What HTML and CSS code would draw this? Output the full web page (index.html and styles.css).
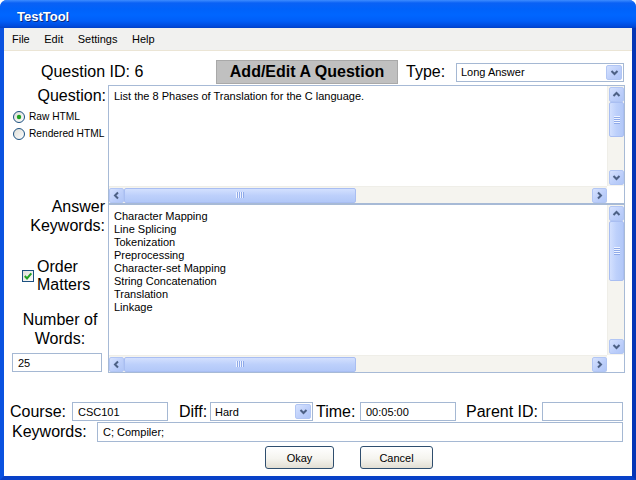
FILE: index.html
```html
<!DOCTYPE html>
<html>
<head>
<meta charset="utf-8">
<link rel="stylesheet" href="styles.css">
</head>
<body>
<div class="window">
  <div class="titlebar"><span class="title">TestTool</span></div>
  <div class="frame">
    <div class="menubar"><span>File</span><span>Edit</span><span>Settings</span><span>Help</span></div>
    <div class="client">
      <div class="toprow">
        <div class="qid">Question ID: 6</div>
        <div class="heading">Add/Edit A Question</div>
        <div class="type-label">Type:</div>
        <div class="select select-type">
          <span class="select-text">Long Answer</span>
          <span class="sbtn drop"><svg width="15" height="15" viewBox="0 0 15 15"><path d="M4.5 6 L7.5 9 L10.5 6" fill="none" stroke="#4d6185" stroke-width="2"/></svg></span>
        </div>
      </div>
      <div class="main">
        <div class="side">
          <div class="big q-label">Question:</div>
          <div class="radios">
            <div class="radio-row">
              <svg width="12" height="12" viewBox="0 0 12 12"><defs><linearGradient id="rg1" x1="0" y1="0" x2="1" y2="1"><stop offset="0" stop-color="#dcdcd5"/><stop offset="1" stop-color="#ffffff"/></linearGradient></defs><circle cx="6" cy="6" r="5.5" fill="url(#rg1)" stroke="#1c5180"/><circle cx="6" cy="6" r="2.2" fill="#21a121"/></svg>
              <span>Raw HTML</span>
            </div>
            <div class="radio-row">
              <svg width="12" height="12" viewBox="0 0 12 12"><defs><linearGradient id="rg2" x1="0" y1="0" x2="1" y2="1"><stop offset="0" stop-color="#dcdcd5"/><stop offset="1" stop-color="#ffffff"/></linearGradient></defs><circle cx="6" cy="6" r="5.5" fill="url(#rg2)" stroke="#1c5180"/></svg>
              <span>Rendered HTML</span>
            </div>
          </div>
          <div class="big ak-label">Answer<br>Keywords:</div>
          <div class="order">
            <svg width="12" height="12" viewBox="0 0 12 12"><defs><linearGradient id="cg" x1="0" y1="0" x2="1" y2="1"><stop offset="0" stop-color="#dcdcd5"/><stop offset="1" stop-color="#ffffff"/></linearGradient></defs><rect x="0.5" y="0.5" width="11" height="11" fill="url(#cg)" stroke="#1c5180"/><path d="M2.8 6 L5 8.5 L9.3 3.3" fill="none" stroke="#21a121" stroke-width="2"/></svg>
            <div class="big order-text">Order<br>Matters</div>
          </div>
          <div class="big nw-label">Number of<br>Words:</div>
          <div class="field nw-field">25</div>
        </div>
        <div class="areas">
          <div class="ta ta-q">
            <div class="ta-text">List the 8 Phases of Translation for the C language.</div>
            <div class="vscroll">
              <span class="sbtn"><svg width="15" height="15" viewBox="0 0 15 15"><path d="M4.5 9 L7.5 6 L10.5 9" fill="none" stroke="#4d6185" stroke-width="2"/></svg></span>
              <div class="vthumb vthumb-q"><div class="grip-v"></div></div>
              <div class="fill"></div>
              <span class="sbtn"><svg width="15" height="15" viewBox="0 0 15 15"><path d="M4.5 6 L7.5 9 L10.5 6" fill="none" stroke="#4d6185" stroke-width="2"/></svg></span>
            </div>
            <div class="hscroll">
              <span class="sbtn"><svg width="15" height="15" viewBox="0 0 15 15"><path d="M9 4.5 L6 7.5 L9 10.5" fill="none" stroke="#4d6185" stroke-width="2"/></svg></span>
              <div class="hthumb"><div class="grip-h"></div></div>
              <div class="fill"></div>
              <span class="sbtn"><svg width="15" height="15" viewBox="0 0 15 15"><path d="M6 4.5 L9 7.5 L6 10.5" fill="none" stroke="#4d6185" stroke-width="2"/></svg></span>
            </div>
            <div class="corner"></div>
          </div>
          <div class="ta ta-k">
            <div class="ta-text">Character Mapping<br>Line Splicing<br>Tokenization<br>Preprocessing<br>Character-set Mapping<br>String Concatenation<br>Translation<br>Linkage</div>
            <div class="vscroll">
              <span class="sbtn"><svg width="15" height="15" viewBox="0 0 15 15"><path d="M4.5 9 L7.5 6 L10.5 9" fill="none" stroke="#4d6185" stroke-width="2"/></svg></span>
              <div class="vthumb vthumb-k"><div class="grip-v"></div></div>
              <div class="fill"></div>
              <span class="sbtn"><svg width="15" height="15" viewBox="0 0 15 15"><path d="M4.5 6 L7.5 9 L10.5 6" fill="none" stroke="#4d6185" stroke-width="2"/></svg></span>
            </div>
            <div class="hscroll">
              <span class="sbtn"><svg width="15" height="15" viewBox="0 0 15 15"><path d="M9 4.5 L6 7.5 L9 10.5" fill="none" stroke="#4d6185" stroke-width="2"/></svg></span>
              <div class="hthumb"><div class="grip-h"></div></div>
              <div class="fill"></div>
              <span class="sbtn"><svg width="15" height="15" viewBox="0 0 15 15"><path d="M6 4.5 L9 7.5 L6 10.5" fill="none" stroke="#4d6185" stroke-width="2"/></svg></span>
            </div>
            <div class="corner"></div>
          </div>
        </div>
      </div>
      <div class="row1">
        <div class="big lbl lbl-course">Course:</div>
        <div class="field f-course">CSC101</div>
        <div class="big lbl lbl-diff">Diff:</div>
        <div class="select select-diff">
          <span class="select-text">Hard</span>
          <span class="sbtn drop"><svg width="15" height="15" viewBox="0 0 15 15"><path d="M4.5 6 L7.5 9 L10.5 6" fill="none" stroke="#4d6185" stroke-width="2"/></svg></span>
        </div>
        <div class="big lbl lbl-time">Time:</div>
        <div class="field f-time">00:05:00</div>
        <div class="big lbl lbl-parent">Parent ID:</div>
        <div class="field f-parent"></div>
      </div>
      <div class="row2">
        <div class="big lbl lbl-kw">Keywords:</div>
        <div class="field f-kw">C; Compiler;</div>
      </div>
      <div class="btnrow">
        <div class="btn btn-okay">Okay</div>
        <div class="btn btn-cancel">Cancel</div>
      </div>
    </div>
  </div>
</div>
</body>
</html>
```
FILE: styles.css
```css
* { box-sizing: border-box; margin: 0; padding: 0; }
html, body { width: 636px; height: 480px; background: #fff; overflow: hidden; }
body { font-family: "Liberation Sans", Arial, sans-serif; color: #000; }

.window {
  width: 636px; height: 480px;
  display: flex; flex-direction: column;
  border-radius: 7px 7px 0 0; overflow: hidden;
  background: #0054e3;
}
.titlebar {
  height: 28px; flex: none;
  background: linear-gradient(to bottom, #3d8cff 0, #0a61f5 3px, #0062fa 9px, #0066ff 15px, #005ef8 21px, #004bdd 26px, #0040c8 28px);
  display: flex; align-items: center; padding-left: 17px; padding-top: 4px;
}
.title { color: #fff; font-weight: bold; font-size: 13px; text-shadow: 1px 1px 0 #0a2a80; }

.frame {
  flex: 1; display: flex; flex-direction: column;
  border-left: 4px solid #0a52e0;
  border-right: 4px solid #0535b5;
  border-bottom: 4px solid #0841c8;
}
.menubar {
  height: 23px; flex: none;
  background: #f1f1ef; border-bottom: 1px solid #ebe5d5;
  display: flex; align-items: center; gap: 14.5px;
  padding-left: 8px; font-size: 11px;
}

.client { flex: 1; background: #fff; display: flex; flex-direction: column; padding: 9px 7px 0 0; }
.big { font-size: 16px; line-height: 18px; }

.toprow { display: flex; align-items: center; height: 24px; }
.qid { width: 212px; padding-left: 37px; font-size: 16px; }
.heading {
  width: 182px; height: 24px; background: #c0c0c0; border: 1px solid #a9a9a9;
  font-weight: bold; font-size: 16px;
  display: flex; align-items: center; justify-content: center;
}
.type-label { width: 58px; padding-left: 8px; font-size: 16px; }

.select {
  height: 19px; border: 1px solid #a5b8d3; background: #fff;
  display: flex; align-items: center; font-size: 11px; padding-left: 4px;
}
.select-text { flex: 1; }
.select-type { width: 168px; }
.select .drop { margin-right: 1px; width: 16px; height: 15px; }

.sbtn {
  width: 15px; height: 15px; flex: none;
  background: linear-gradient(to bottom right, #d6e2fe, #bccefa 60%, #b0c6f7);
  border: 1px solid #b2c6f4; border-radius: 2px;
  display: flex; align-items: center; justify-content: center;
}
.sbtn svg { display: block; flex: none; }

.main { display: flex; margin-top: 1px; }
.side { width: 104px; display: flex; flex-direction: column; }
.q-label { margin-top: 2px; text-align: right; padding-right: 2px; }
.radios { margin-top: 3px; font-size: 10.2px; white-space: nowrap; }
.radio-row { height: 17px; display: flex; align-items: center; gap: 4px; padding-left: 9px; }
.ak-label { margin-top: 55px; text-align: right; padding-right: 3px; line-height: 19px; }
.order { margin-top: 23px; display: flex; align-items: center; gap: 3px; padding-left: 18px; }
.nw-label { margin-top: 17px; text-align: center; padding-left: 8px; line-height: 18.5px; }
.nw-field { margin-top: 5px; margin-left: 8px; width: 90px; }

.field {
  height: 19px; border: 1px solid #a5b8d3; background: #fff;
  font-size: 11px; padding-left: 5px;
  display: flex; align-items: center;
}

.areas { width: 517px; }
.ta {
  border: 1px solid #a7bad6; display: grid;
  grid-template-columns: 1fr 17px; grid-template-rows: 1fr 17px;
}
.ta-q { height: 119px; }
.ta-k { height: 169px; }
.ta-text { font-size: 11px; line-height: 13px; padding: 4px 5px; overflow: hidden; }
.ta-k .ta-text { padding-top: 5px; }
.vscroll {
  background: #f5f4ef; border-left: 1px solid #efeee8;
  display: flex; flex-direction: column; padding: 1px 0 1px 1px;
}
.hscroll {
  background: #f5f4ef; border-top: 1px solid #efeee8;
  display: flex; align-items: center;
}
.fill { flex: 1; }
.corner { background: #fff; }
.vthumb {
  width: 15px; border: 1px solid #a9bef2; border-radius: 2px;
  background: linear-gradient(to right, #d3e0fe, #bdd0fb 50%, #b2c8f8);
  display: flex; align-items: center; justify-content: center;
}
.vthumb-q { height: 35px; }
.vthumb-k { height: 60px; }
.grip-v { width: 6px; height: 8px; background: repeating-linear-gradient(to bottom, #eef3ff 0 1px, #8faae9 1px 2px); }
.hthumb {
  width: 232px; height: 15px; border: 1px solid #a9bef2; border-radius: 2px;
  background: linear-gradient(to bottom, #d3e0fe, #bdd0fb 50%, #b2c8f8);
  display: flex; align-items: center; justify-content: center;
}
.grip-h { width: 8px; height: 6px; background: repeating-linear-gradient(to right, #eef3ff 0 1px, #8faae9 1px 2px); }

.row1 { display: flex; align-items: center; margin-top: 29px; height: 19px; }
.row2 { display: flex; align-items: center; margin-top: 1px; height: 20px; }
.row2 .field { height: 20px; }
.lbl-course { margin-left: 6px; width: 62px; }
.f-course { width: 96px; }
.lbl-diff { margin-left: 11px; width: 31px; }
.select-diff { width: 103px; }
.lbl-time { margin-left: 3px; width: 44px; }
.f-time { width: 96px; }
.lbl-parent { margin-left: 10px; width: 76px; }
.f-parent { width: 81px; }
.lbl-kw { margin-left: 8px; width: 85px; }
.f-kw { width: 526px; }

.btnrow { display: flex; margin-top: 4px; }
.btn {
  height: 23px; border: 1px solid #2f4e6e; border-radius: 3px;
  background: linear-gradient(to bottom, #ffffff, #f5f4ef 55%, #e2ded3);
  font-size: 11px; display: flex; align-items: center; justify-content: center;
}
.btn-okay { margin-left: 261px; width: 69px; }
.btn-cancel { margin-left: 26px; width: 73px; }
```
